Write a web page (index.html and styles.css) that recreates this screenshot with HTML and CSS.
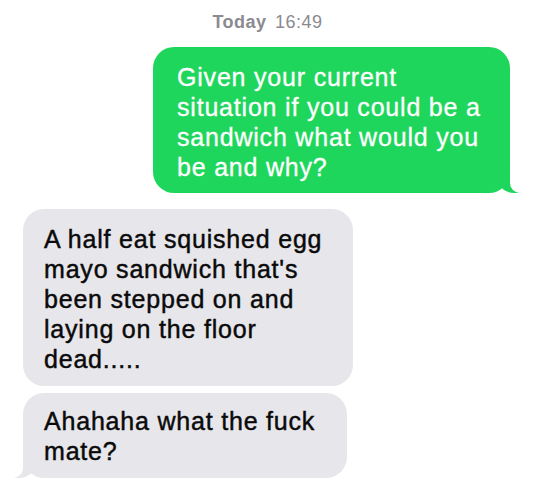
FILE: index.html
```html
<!DOCTYPE html>
<html lang="en">
<head>
<meta charset="utf-8">
<title>Messages</title>
<link rel="stylesheet" href="styles.css">
</head>
<body>
<main class="thread">
  <p class="stamp"><b>Today</b> 16:49</p>
  <div class="bubble sent">Given your current situation if you could be a sandwich what would you be and why?</div>
  <div class="bubble recv first">A half eat squished egg mayo sandwich that's been stepped on and laying on the floor dead.....</div>
  <div class="bubble recv last tail">Ahahaha what the fuck mate?</div>
</main>
</body>
</html>
```

FILE: styles.css
```css
html, body {
  margin: 0;
  padding: 0;
  background: #ffffff;
}

.thread {
  width: 535px;
  height: 482px;
  overflow: hidden;
  display: flex;
  flex-direction: column;
  font-family: "Liberation Sans", Arial, sans-serif;
}

.stamp {
  margin: 0;
  padding-top: 11px;
  text-align: center;
  font-size: 18px;
  line-height: 22px;
  letter-spacing: 0.5px;
  color: #8a8a8f;
}

.stamp b {
  font-weight: bold;
  margin-right: 3px;
}

.bubble {
  position: relative;
  box-sizing: border-box;
  border-radius: 21px;
  font-size: 25px;
  line-height: 30px;
  letter-spacing: 0.8px;
}

.sent {
  align-self: flex-end;
  width: 357px;
  margin: 14px 25px 0 0;
  padding: 15px 22px 11px 24px;
  background: #1fd65c;
  color: #ffffff;
  -webkit-text-stroke: 0.3px #ffffff;
}

.sent::before {
  content: "";
  position: absolute;
  right: -8px;
  bottom: 0;
  width: 20px;
  height: 20px;
  background: #1fd65c;
  border-bottom-left-radius: 16px 14px;
}

.sent::after {
  content: "";
  position: absolute;
  right: -10px;
  bottom: 0;
  width: 10px;
  height: 20px;
  background: #ffffff;
  border-bottom-left-radius: 10px;
}

.recv {
  align-self: flex-start;
  margin-left: 23px;
  padding: 15px 20px 12px 21px;
  background: #e6e6eb;
  color: #0a0a0a;
  -webkit-text-stroke: 0.45px #0a0a0a;
}

.recv.first {
  width: 330px;
  margin-top: 16px;
}

.recv.last {
  width: 324px;
  margin-top: 7px;
  padding-top: 13px;
}

.tail::before {
  content: "";
  position: absolute;
  left: -8px;
  bottom: 0;
  width: 20px;
  height: 20px;
  background: #e6e6eb;
  border-bottom-right-radius: 16px 14px;
}

.tail::after {
  content: "";
  position: absolute;
  left: -10px;
  bottom: 0;
  width: 10px;
  height: 20px;
  background: #ffffff;
  border-bottom-right-radius: 10px;
}
```
